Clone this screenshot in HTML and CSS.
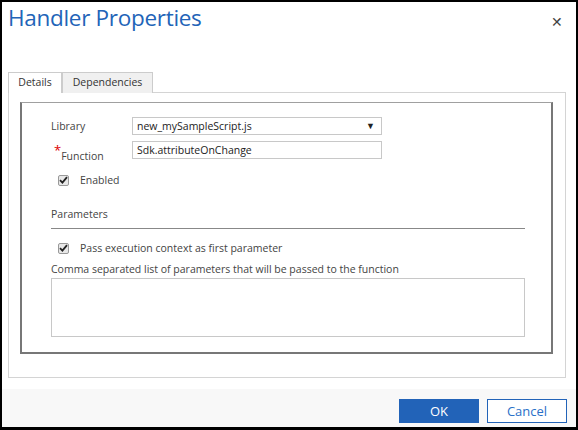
FILE: index.html
```html
<!DOCTYPE html>
<html>
<head>
<meta charset="utf-8">
<link rel="stylesheet" href="styles.css">
</head>
<body>
<div class="dialog">
  <header class="head">
    <h1 class="title">Handler Properties</h1>
    <span class="close">&#x2715;</span>
  </header>
  <main class="content">
    <div class="tabs">
      <div class="tab active">Details</div>
      <div class="tab">Dependencies</div>
    </div>
    <div class="panel">
      <div class="group">
        <div class="row">
          <span class="label">Library</span>
          <div class="field select"><span>new_mySampleScript.js</span><span class="arrow">&#9660;</span></div>
        </div>
        <div class="row">
          <span class="label"><span class="req">*</span><span class="fn">Function</span></span>
          <div class="field">Sdk.attributeOnChange</div>
        </div>
        <div class="check"><span class="box"><svg width="9" height="8" viewBox="0 0 9 8"><path d="M1 4.2 L3.4 6.6 L8 1.2" fill="none" stroke="#222" stroke-width="1.8"/></svg></span><span>Enabled</span></div>
        <div class="section">Parameters</div>
        <div class="check check2"><span class="box"><svg width="9" height="8" viewBox="0 0 9 8"><path d="M1 4.2 L3.4 6.6 L8 1.2" fill="none" stroke="#222" stroke-width="1.8"/></svg></span><span>Pass execution context as first parameter</span></div>
        <div class="hint">Comma separated list of parameters that will be passed to the function</div>
        <div class="textarea"></div>
      </div>
    </div>
  </main>
  <footer class="foot">
    <button class="btn ok">OK</button>
    <button class="btn cancel">Cancel</button>
  </footer>
</div>
</body>
</html>
```

FILE: styles.css
```css
* { box-sizing: border-box; }
html, body { margin: 0; padding: 0; }
body { font-family: "Open Sans", "Noto Sans", sans-serif; color: #444; background: #fff; }
.dialog {
  width: 578px; height: 430px;
  border: 2px solid #000; border-bottom-width: 3px;
  display: flex; flex-direction: column;
  background: #fff;
}
.head { display: flex; justify-content: space-between; align-items: flex-start; padding: 0 13px 0 6px; height: 70px; }
.title { margin: 0; font-weight: 400; font-size: 22.5px; line-height: 32px; color: #2264b8; letter-spacing: -0.3px; }
.close { font-size: 14px; color: #444; margin-top: 10px; }
.content { padding: 0 10px 0 6px; }
.tabs { display: flex; height: 21px; position: relative; z-index: 1; }
.tab {
  font-size: 10.5px; color: #333; line-height: 19px;
  border: 1px solid #ccc; border-bottom: none; background: #f0f0f0;
}
.tab.active { background: #fff; width: 54px; text-align: center; height: 21px; }
.tab + .tab { width: 91px; text-align: center; }
.panel { border: 1px solid #d4d4d4; height: 286px; padding: 9px 12px 0 11px; margin-top: -1px; }
.group {
  height: 252px;
  border-top: 1px solid #a0a0a0; border-left: 2px solid #777; border-right: 2px solid #777; border-bottom: 2px solid #777;
  padding: 14px 26px 0 29px;
  font-size: 10.5px;
}
.row { display: flex; align-items: center; height: 18px; margin-bottom: 6px; }
.label { width: 81px; font-size: 10.5px; color: #444; }
.req { color: #d00; font-size: 13px; margin-left: 3px; vertical-align: 2px; }
.fn { position: relative; top: 3px; }
.field { width: 250px; height: 18px; border: 1px solid #c8c8c8; font-size: 10.5px; color: #222; padding: 0 4px; line-height: 16px; display: flex; justify-content: space-between; }
.arrow { font-size: 9px; color: #222; padding-right: 2px; }
.check { display: flex; align-items: center; margin: 14px 0 0 7px; color: #444; height: 14px; }
.box { width: 11px; height: 11px; border: 1px solid #999; border-radius: 2px; background: #e8e8e8; margin-right: 11px; display: flex; align-items: center; justify-content: center; }
.section { margin-top: 20px; padding-bottom: 7px; border-bottom: 1px solid #888; }
.check2 { margin-top: 12px; }
.hint { margin-top: 7px; }
.textarea { margin-top: 2px; height: 59px; border: 1px solid #c8c8c8; }
.foot {
  margin-top: 11px; background: #f8f8f8; flex: 1;
  display: flex; justify-content: flex-end; align-items: flex-start; gap: 8px;
  padding: 10px 9px 0 0;
}
.btn { width: 80px; height: 24px; font-family: inherit; font-size: 13px; border: 1px solid #2263b8; }
.ok { background: #2263b8; color: #fff; }
.cancel { background: #fff; color: #2a70c8; }
```
